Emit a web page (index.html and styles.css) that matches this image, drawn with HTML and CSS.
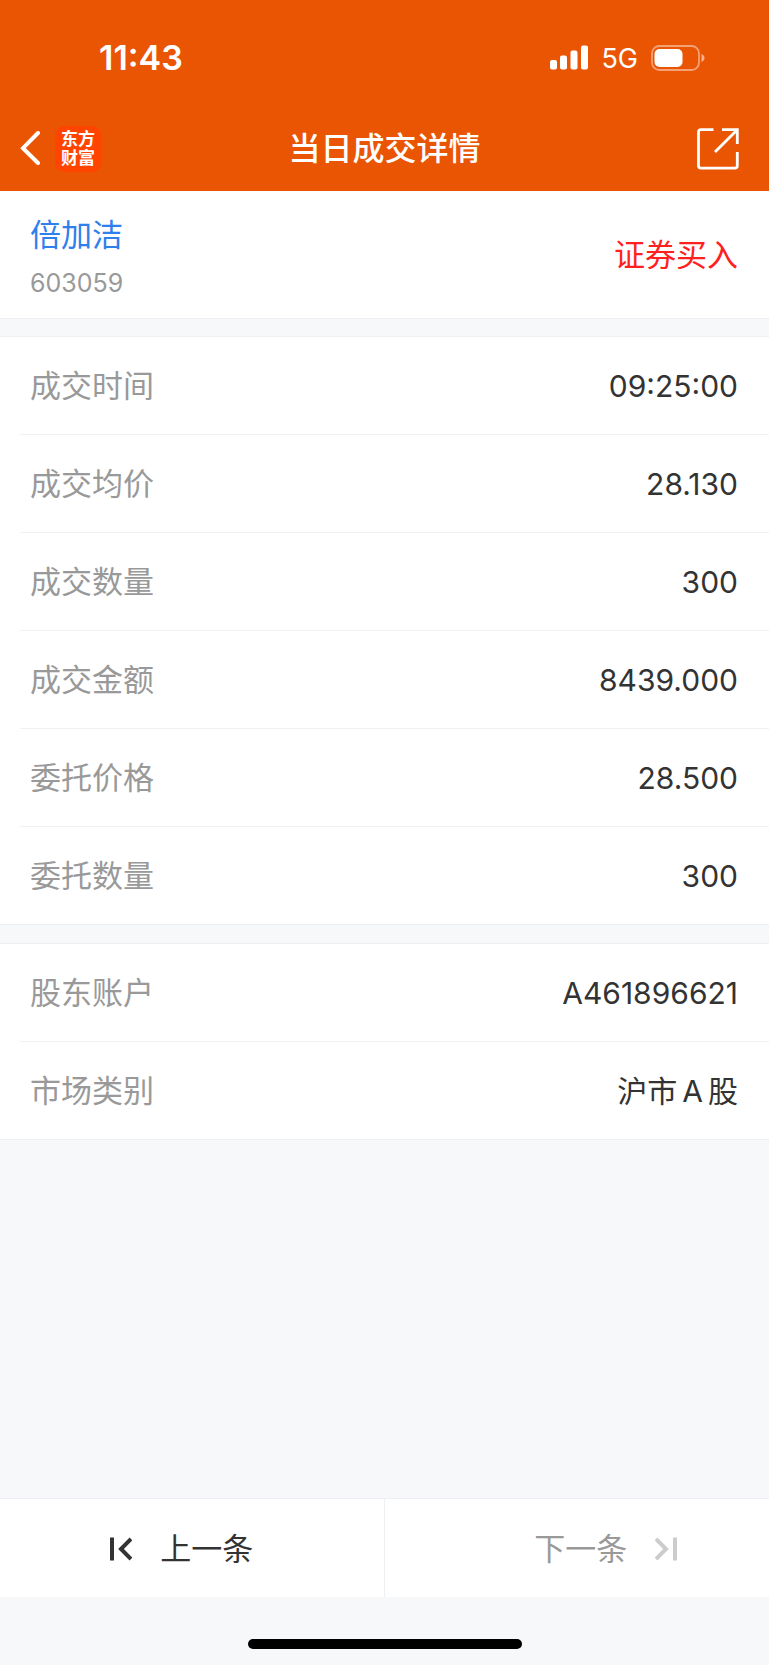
FILE: index.html
```html
<!DOCTYPE html>
<html lang="zh-CN">
<head>
    <meta charset="UTF-8">
    <meta name="viewport" content="width=device-width, initial-scale=1.0">
    <title>当日成交详情</title>
    <link rel="stylesheet" href="styles.css">
</head>
<body>
    <header class="header">
        <div class="status-bar">
            <span class="time">11:43</span>
            <div class="status-icons">
                <svg class="signal" width="38" height="25" viewBox="0 0 38 25" fill="#fff">
                    <rect x="0" y="15" width="7" height="9.5" rx="2"/>
                    <rect x="10" y="10.5" width="7" height="14" rx="2"/>
                    <rect x="20.5" y="5.5" width="7" height="19" rx="2"/>
                    <rect x="31" y="0.5" width="7" height="24" rx="2"/>
                </svg>
                <span class="network">5G</span>
                <svg class="battery" width="54" height="26" viewBox="0 0 54 26">
                    <rect x="1" y="1" width="47" height="24" rx="7.5" fill="none" stroke="#fff" stroke-opacity="0.45" stroke-width="1.8"/>
                    <rect x="3.5" y="4" width="28" height="18" rx="5" fill="#fff"/>
                    <path d="M50.5 9 C54.5 10.5 54.5 15.5 50.5 17 Z" fill="#fff" fill-opacity="0.55"/>
                </svg>
            </div>
        </div>
        <nav class="nav-bar">
            <div class="nav-left">
                <button class="icon-btn" type="button" aria-label="返回">
                    <svg width="20" height="36" viewBox="0 0 20 36" fill="none" stroke="#fff" stroke-width="4" stroke-linecap="round">
                        <path d="M18 2 L3 17.2 L18 32"/>
                    </svg>
                </button>
                <div class="logo">东方<br>财富</div>
            </div>
            <h1>当日成交详情</h1>
            <div class="nav-right">
                <button class="icon-btn" type="button" aria-label="分享">
                    <svg width="42" height="42" viewBox="0 0 42 42" fill="none" stroke="#fff" stroke-width="2.8">
                        <path d="M16.5 1.6 H4 Q1.5 1.6 1.5 4 V37.5 Q1.5 40.2 4 40.2 H38 Q40.3 40.2 40.3 37.8 V24"/>
                        <path d="M25 1.6 H40.3 V16"/>
                        <path d="M18 24 L39.5 2.4"/>
                    </svg>
                </button>
            </div>
        </nav>
    </header>

    <main>
        <section class="stock">
            <div>
                <a class="stock-name" href="#">倍加洁</a>
                <div class="stock-code">603059</div>
            </div>
            <span class="direction">证券买入</span>
        </section>

        <dl class="group">
            <div class="row"><dt>成交时间</dt><dd>09:25:00</dd></div>
            <div class="row"><dt>成交均价</dt><dd>28.130</dd></div>
            <div class="row"><dt>成交数量</dt><dd>300</dd></div>
            <div class="row"><dt>成交金额</dt><dd>8439.000</dd></div>
            <div class="row"><dt>委托价格</dt><dd>28.500</dd></div>
            <div class="row"><dt>委托数量</dt><dd>300</dd></div>
        </dl>

        <dl class="group">
            <div class="row"><dt>股东账户</dt><dd>A461896621</dd></div>
            <div class="row"><dt>市场类别</dt><dd>沪市<span class="latin">A</span>股</dd></div>
        </dl>
    </main>

    <footer>
        <div class="pager">
            <button class="prev" type="button">
                <svg width="22" height="24" viewBox="0 0 22 24" fill="none" stroke="#333" stroke-width="4">
                    <path d="M2 0.5 V23.5"/>
                    <path d="M21 2 L11 12 L21 22"/>
                </svg>
                上一条
            </button>
            <button class="next" type="button" disabled>
                下一条
                <svg width="22" height="24" viewBox="0 0 22 24" fill="none" stroke="#ccc" stroke-width="4">
                    <path d="M1 2 L11 12 L1 22"/>
                    <path d="M20 0.5 V23.5"/>
                </svg>
            </button>
        </div>
        <div class="home-area">
            <div class="home-indicator"></div>
        </div>
    </footer>
</body>
</html>
```
FILE: styles.css
```css
* {
    box-sizing: border-box;
}
body {
    margin: 0;
    min-height: 100vh;
    display: flex;
    flex-direction: column;
    background: #f7f8fa;
    color: #333;
    font-family: Inter, "Noto Sans CJK SC", sans-serif;
    font-size: 31px;
    line-height: 40px;
}
button {
    border: none;
    background: none;
    padding: 0;
    font: inherit;
    color: inherit;
    cursor: pointer;
}
svg {
    display: block;
}

/* Header */
.header {
    background: #ea5504;
    color: #fff;
}
.status-bar {
    display: flex;
    justify-content: space-between;
    align-items: center;
    height: 106px;
    padding: 9px 64px 0 99px;
}
.time {
    font-size: 34px;
    font-weight: 600;
}
.status-icons {
    display: flex;
    align-items: center;
    gap: 13px;
}
.network {
    padding-top: 2px;
    font-size: 27px;
}
.nav-bar {
    display: grid;
    grid-template-columns: 1fr auto 1fr;
    align-items: center;
    height: 85px;
}
.nav-left,
.nav-right {
    display: flex;
    align-items: center;
}
.nav-left {
    gap: 15px;
    padding-left: 20px;
}
.nav-right {
    justify-content: flex-end;
    padding-right: 30px;
}
.logo {
    width: 46px;
    height: 46px;
    padding-top: 4px;
    border-radius: 9px;
    background: #ff4400;
    font-size: 17px;
    font-weight: 700;
    line-height: 19px;
    text-align: center;
}
h1 {
    margin: 0;
    font-size: 32px;
    font-weight: 500;
}

/* Stock summary */
.stock {
    display: flex;
    justify-content: space-between;
    align-items: center;
    height: 128px;
    padding: 0 31px 0 30px;
    background: #fff;
    border-bottom: 1px solid #eeeff2;
}
.stock-name {
    display: block;
    padding-top: 8px;
    color: #2f80ec;
    text-decoration: none;
}
.stock-code {
    margin-top: 8px;
    color: #999;
    font-size: 25px;
}
.direction {
    color: #ff2020;
}

/* Detail rows */
.group {
    margin: 18px 0 20px;
    padding-left: 20px;
    background: #fff;
    box-shadow: 0 -1px #eeeff2, 0 1px #eeeff2;
}
.row {
    display: flex;
    justify-content: space-between;
    align-items: center;
    height: 98px;
    padding: 0 31px 0 10px;
    border-bottom: 1px solid #f2f2f4;
}
.row:last-child {
    height: 97px;
    border-bottom: none;
}
dt {
    color: #999;
}
dd {
    margin: 0;
    font-size: 30px;
}
.latin {
    padding: 0 5px;
}

/* Bottom pager */
footer {
    margin-top: auto;
}
.pager {
    display: grid;
    grid-template-columns: 1fr 1fr;
    background: #fff;
    border-top: 1px solid #eeeff2;
}
.pager button {
    display: flex;
    justify-content: center;
    align-items: center;
    gap: 28px;
    height: 98px;
    padding-top: 2px;
}
.pager .prev {
    padding-right: 20px;
    border-right: 1px solid #eeeff2;
}
.pager .next {
    padding-left: 58px;
    color: #999;
    cursor: default;
}
.home-area {
    height: 68px;
    padding-top: 42px;
}
.home-indicator {
    width: 274px;
    height: 10px;
    margin: 0 auto;
    border-radius: 5px;
    background: #000;
}
```
